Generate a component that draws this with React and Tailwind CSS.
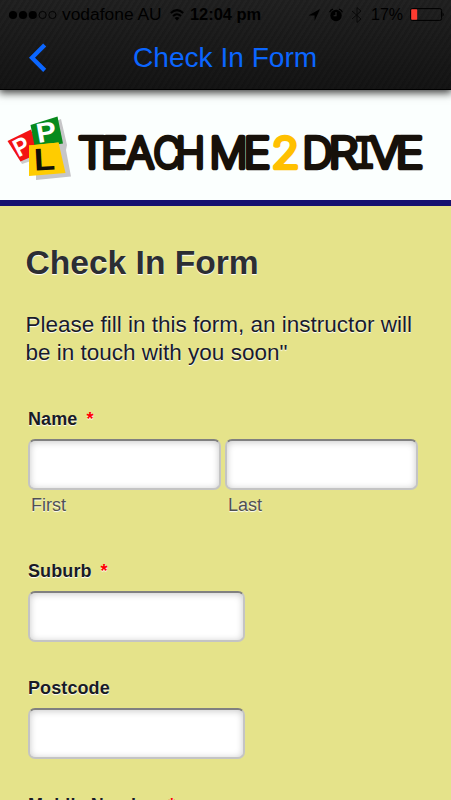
import React from "react";

const SHADOW = "[text-shadow:0_1px_1px_#fff]";

function StatusBar() {
  return (
    <div className="flex h-[29px] items-center whitespace-nowrap text-black">
      <svg className="ml-2 h-[14px] w-[50px] shrink-0" viewBox="0 0 50 14">
        {[5, 15, 24.8].map((x) => (
          <circle key={x} cx={x} cy="7" r="4.1" fill="#000" />
        ))}
        {[34.6, 44.4].map((x) => (
          <circle key={x} cx={x} cy="7" r="3.6" fill="none" stroke="#000" strokeWidth="0.9" />
        ))}
      </svg>
      <span className="ml-1 w-[108px] text-[17.4px] leading-[29px]">vodafone AU</span>
      <svg className="h-[14px] w-[16px] shrink-0" viewBox="0 0 16 14" fill="none" stroke="#000" strokeWidth="2">
        <path d="M.8 5Q7-.8 13.200 5" />
        <path d="M3 8Q7 4.400 11 8" />
        <path d="M4.600 10Q7 8 9.400 10L7 12.600Z" fill="#000" stroke="none" />
      </svg>
      <span className="ml-[4px] w-[118px] text-[16.4px] font-bold leading-[29px]">12:04 pm</span>
      <svg className="h-[14px] w-[13px] shrink-0" viewBox="0 0 13 14">
        <path d="M12 1L6.600 13V7.500H.4Z" fill="#000" />
      </svg>
      <svg className="ml-[8px] h-[14px] w-[14px] shrink-0" viewBox="0 0 14 14">
        <circle cx="7" cy="7.500" r="5.700" fill="#000" />
        <path d="M.6 4.200Q1.500 1.800 4 1.200M13.400 4.200Q12.500 1.800 10 1.200" stroke="#000" strokeWidth="1.2" fill="none" />
        <path d="M7 4V7.700H4.600" stroke="#292929" strokeWidth="1.1" fill="none" />
      </svg>
      <svg className="ml-[9px] h-[16px] w-[10px] shrink-0" viewBox="0 0 10 16">
        <path d="M0 4L9 12L5 15.400V.6L9 4L0 12" fill="none" stroke="#090909" strokeWidth="1" />
      </svg>
      <span className="ml-[9px] w-[39px] text-[16px] leading-[29px]">17%</span>
      <svg className="h-[13px] w-[35px] shrink-0" viewBox="0 0 35 13">
        <rect x=".6" y=".6" width="31" height="11.800" rx="1.800" fill="none" stroke="#000" />
        <rect x="1.200" y="1.200" width="6" height="10.600" rx=".8" fill="#ff3b30" />
        <path d="M32.500 4.200Q35 6.500 32.500 8.800Z" fill="#000" />
      </svg>
    </div>
  );
}

function Header() {
  return (
    <header className="relative z-10 h-[90px] border-b border-black bg-[#1b1b1b] bg-[repeating-linear-gradient(122deg,rgba(0,0,0,0.13)_0px,rgba(0,0,0,0.13)_2px,transparent_3px,transparent_5px),linear-gradient(#222222,#151515)] shadow-[0_2px_8px_1px_rgba(0,0,0,0.75)]">
      <StatusBar />
      <div className="flex h-[58px] items-center">
        <svg className="ml-[28px] h-[30px] w-[20px]" viewBox="0 0 20 30" fill="none" stroke="#0b66ff" strokeWidth="4.3">
          <path d="M16.700 2L4 14.800L16.700 27.400" />
        </svg>
        <h1 className="ml-[85px] whitespace-nowrap text-[28.1px] leading-none text-[#0b66ff]">Check In Form</h1>
      </div>
    </header>
  );
}

const SANS = "Inter, Roboto, sans-serif";
const MONO = "'Liberation Mono', monospace";

const LETTERS = [
  ["T", 78, 28, SANS],
  ["E", 101, 26.5, SANS],
  ["A", 126, 28, SANS],
  ["C", 153.5, 28, SANS],
  ["H", 175.5, 29.5, SANS],
  ["M", 209.5, 38, SANS],
  ["E", 243.5, 27, SANS],
  ["2", 271.5, 28, SANS],
  ["D", 302.5, 30, SANS],
  ["R", 328.5, 30, SANS],
  ["I", 353, 23, MONO],
  ["V", 370, 30, SANS],
  ["E", 395.5, 28, SANS],
];

function Banner() {
  return (
    <div className="h-[110px] bg-[#fbfffe]">
      <svg className="block h-[110px] w-full" viewBox="0 90 451 110">
        <path d="M12 147L34 135L43 157L22 164Z" fill="#ccc" />
        <path d="M36 129L61 119L67 145L66 150L71 176.500L36 180Z" fill="#c6c6c8" />
        <path d="M7.500 141L31 129.500L40 153L20.500 161.500Z" fill="#f31313" />
        <path d="M30.500 125L57.500 116.500L63 143.500L35 148Z" fill="#078a1c" />
        <path d="M29 145.500L58.500 142.500L65.500 173L29 176Z" fill="#fc0" />
        <text transform="translate(18.500 157.500) rotate(-27)" fontSize="25" fontWeight="bold" fill="#fff" textLength="15" lengthAdjust="spacingAndGlyphs">P</text>
        <text transform="translate(38 143) rotate(-10)" fontSize="27.500" fontWeight="bold" fill="#fff" textLength="20" lengthAdjust="spacingAndGlyphs">P</text>
        <path d="M29 145.500L58.500 142.500L59.200 146L29 149Z" fill="#fc0" />
        <text transform="translate(34.500 170.500) rotate(-3)" fontSize="31" fontWeight="bold" fill="#120f08" textLength="21" lengthAdjust="spacingAndGlyphs">L</text>
        <g fontWeight="200" fontSize="42.500" strokeWidth="4.600" strokeLinejoin="round" strokeLinecap="round">
          {LETTERS.map(([c, x, w, family]) => (
            <text
              key={x}
              x={x}
              y="167.500"
              fontFamily={family}
              fontSize={family === MONO ? 47 : 42.5}
              textLength={w}
              lengthAdjust="spacingAndGlyphs"
              strokeWidth={family === MONO ? 2.4 : 4.6}
              fill={c === "2" ? "#ffc000" : "#17110a"}
              stroke={c === "2" ? "#ffc000" : "#17110a"}
            >
              {c}
            </text>
          ))}
        </g>
      </svg>
    </div>
  );
}

function Label({ children, required }) {
  return (
    <div className={`flex h-[22px] text-[18px] font-bold leading-[22px] tracking-[0.1px] text-[#191b25] ${SHADOW}`}>
      <span>{children}</span>
      {required && <span className="ml-[9px] text-[#f00]">*</span>}
    </div>
  );
}

function Field({ label }) {
  return (
    <input
      aria-label={label}
      className="block h-[51px] w-full rounded-[7px] border-2 border-[#c4c4c4] border-t-[#808080] bg-white px-3 shadow-[inset_0_1px_7px_rgba(0,0,0,0.22)] outline-none"
    />
  );
}

function Hint({ children }) {
  return <span className={`ml-[3px] block text-[18px] leading-[20px] text-[#505052] ${SHADOW}`}>{children}</span>;
}

export default function App() {
  return (
    <div className="h-[800px] w-full overflow-hidden bg-[#e5e38a] font-['Liberation_Sans',Arial,sans-serif]">
      <Header />
      <Banner />
      <main className="border-t-[6px] border-[#151270] pl-[25.5px]">
        <h2 className={`mt-[37px] h-[40px] whitespace-nowrap text-[33.6px] font-bold leading-[40px] text-[#2c2e33] ${SHADOW}`}>
          Check In Form
        </h2>
        <p className={`mt-[28px] whitespace-nowrap text-[22.5px] leading-[28px] text-[#191b2b] ${SHADOW}`}>
          Please fill in this form, an instructor will
          <br />
          be in touch with you soon"
        </p>
        <form className="ml-[2.5px] mt-[41px]">
          <Label required>Name</Label>
          <div className="mt-[9px] flex gap-[4px]">
            <div className="w-[193px]">
              <Field label="First" />
              <div className="mt-[5px]"><Hint>First</Hint></div>
            </div>
            <div className="w-[193px]">
              <Field label="Last" />
              <div className="mt-[5px]"><Hint>Last</Hint></div>
            </div>
          </div>
          <div className="mt-[45px] w-[217px]">
            <Label required>Suburb</Label>
            <div className="mt-[9px]"><Field label="Suburb" /></div>
          </div>
          <div className="mt-[35px] w-[217px]">
            <Label>Postcode</Label>
            <div className="mt-[9px]"><Field label="Postcode" /></div>
          </div>
          <div className="mt-[35px] w-[217px]">
            <Label required>Mobile Number</Label>
          </div>
        </form>
      </main>
    </div>
  );
}
